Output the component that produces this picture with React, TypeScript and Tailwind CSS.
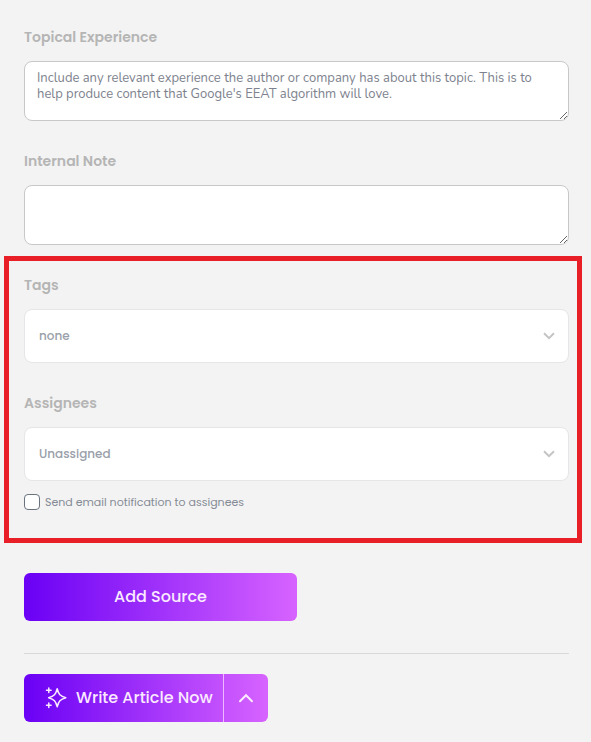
import { useState } from "react"
import type { ReactNode } from "react"

interface FieldProps {
  label: string
  children: ReactNode
}

function Field({ label, children }: FieldProps) {
  return (
    <div>
      <div className="mb-3 flex h-6 items-center">
        <label className="text-sm leading-6 font-semibold whitespace-nowrap text-[#b5b5b5]">{label}</label>
      </div>
      {children}
    </div>
  )
}

function NoteArea({ placeholder }: { placeholder?: string }) {
  return (
    <textarea
      placeholder={placeholder}
      className="block h-[60px] w-full resize overflow-hidden rounded-lg border border-[#c8c8c8] bg-white px-3 py-2 font-['Nunito','Open_Sans',sans-serif] text-[13px] leading-4 text-[#6b7280] outline-none placeholder:text-[#7d828e]"
    />
  )
}

function SelectBox({ value }: { value: string }) {
  return (
    <button
      type="button"
      className="flex h-[54px] w-full items-center justify-between rounded-lg border border-[#e6e6e8] bg-white pr-[13px] pl-3.5"
    >
      <span className="text-xs font-medium text-[#9aa0aa]">{value}</span>
      <svg width="12" height="8" viewBox="0 0 12 8" fill="none" stroke="#c4c4c4" strokeWidth="2">
        <path d="M1 1.2 6 6.2 11 1.2" />
      </svg>
    </button>
  )
}

function SparklesIcon() {
  return (
    <svg width="22" height="24" viewBox="0 0 22 24" fill="none" stroke="currentColor" strokeWidth="1.5" strokeLinecap="round" strokeLinejoin="round">
      <path d="M12.2 2.8C13.6 8.4 15.2 10.3 20.8 11.8C15.2 13.3 13.6 15.2 12.2 20.8C10.8 15.2 9.2 13.3 3.6 11.8C9.2 10.3 10.8 8.4 12.2 2.8Z" />
      <path d="M3.8 1.9V6.5M1.5 4.2H6.1M3.8 16.9V21.5M1.5 19.2H6.1" />
    </svg>
  )
}

export default function App() {
  const [notify, setNotify] = useState(false)

  return (
    <div className="min-h-screen bg-[#f3f3f3] pt-[25px] pr-[22px] pl-6 font-['Poppins','Inter',sans-serif]">
      <div className="flex flex-col gap-7">
        <Field label="Topical Experience">
          <NoteArea placeholder="Include any relevant experience the author or company has about this topic. This is to help produce content that Google's EEAT algorithm will love." />
        </Field>
        <Field label="Internal Note">
          <NoteArea />
        </Field>

        <section className="relative flex flex-col gap-7">
          {/* Highlight frame */}
          <div className="pointer-events-none absolute -top-[17px] -right-[13px] -bottom-[33px] -left-5 border-5 border-[#e91f27]" />
          <Field label="Tags">
            <SelectBox value="none" />
          </Field>
          <div>
            <Field label="Assignees">
              <SelectBox value="Unassigned" />
            </Field>
            <label className="mt-[13px] flex h-4 items-center gap-[5px]">
              <input
                type="checkbox"
                checked={notify}
                onChange={(e) => setNotify(e.target.checked)}
                className="size-4 appearance-none rounded border border-[#6b7280] bg-white checked:bg-[#6a00f5]"
              />
              <span className="text-[11px] leading-4 whitespace-nowrap text-[#858b96]">Send email notification to assignees</span>
            </label>
          </div>
        </section>
      </div>

      <button
        type="button"
        className="mt-[63px] flex h-12 w-[273px] items-center justify-center rounded-md bg-linear-to-r/srgb from-[#6a00f5] to-[#d763ff] text-base font-medium text-[#fbe9ff]"
      >
        Add Source
      </button>

      <hr className="mt-8 border-[#d9d9d9]" />

      <div className="mt-5 flex h-12 w-[244px] rounded-md bg-linear-to-r/srgb from-[#6a00f5] to-[#d763ff] text-[#fbe9ff]">
        <button type="button" className="flex w-[199px] items-center gap-[9px] pl-[21px] text-base font-medium whitespace-nowrap">
          <SparklesIcon />
          <span>Write Article Now</span>
        </button>
        <button type="button" className="flex flex-1 items-center justify-center border-l border-[#f0b8ff]">
          <svg width="16" height="10" viewBox="0 0 16 10" fill="none" stroke="currentColor" strokeWidth="2" strokeLinecap="round">
            <path d="M2 8.2 8 2.2 14 8.2" />
          </svg>
        </button>
      </div>
    </div>
  )
}
